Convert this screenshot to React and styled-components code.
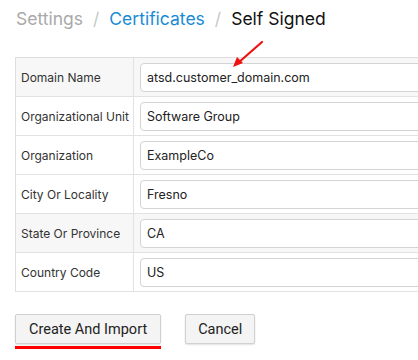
import React from 'react'
import styled, { createGlobalStyle } from 'styled-components'

const GlobalStyle = createGlobalStyle`
    body {
        margin: 0;
        background: #fff;
        overflow: hidden;
        font-family: Inter, "Noto Sans", sans-serif;
    }
`

const Page = styled.div`
    position: relative;
    padding: 5px 0 0 15px;
    width: 560px;
`

const Breadcrumb = styled.div`
    display: flex;
    align-items: center;
    gap: 9px;
    font-size: 17.5px;
    height: 26px;
    margin-bottom: 26px;
    padding-left: 1px;
`

const Crumb = styled.span`
    color: ${props => props.color};
`

const Sep = styled.span`
    color: #c8c8c8;
    margin: 0 1px;
`

const Table = styled.table`
    border-collapse: collapse;
    table-layout: fixed;
    width: 520px;
    border: 1px solid #dedede;
`

const Row = styled.tr`
    height: 39px;
    border-bottom: 1px solid #e2e2e2;
    background: ${props => (props.shade ? '#f7f7f7' : '#fff')};
`

const LabelCol = styled.col`
    width: 118px;
`

const Label = styled.td`
    padding: 0 5px;
    font-size: 12px;
    color: #333;
    border-right: 1px solid #e2e2e2;
    white-space: nowrap;
    overflow: hidden;
`

const Cell = styled.td`
    padding: 4px 6px;
`

const Input = styled.input`
    box-sizing: border-box;
    display: block;
    width: 100%;
    height: 29px;
    border: 1px solid #d4d4d4;
    border-radius: 4px;
    background: #fff;
    padding: 0 6px;
    font-family: Inter, "Noto Sans", sans-serif;
    font-size: 12.5px;
    color: #222;
    outline: none;
`

const Actions = styled.div`
    display: flex;
    gap: 24px;
    margin-top: 22px;
`

const ButtonWrap = styled.div`
    display: flex;
    flex-direction: column;
    gap: 2px;
`

const Button = styled.button`
    height: 30px;
    padding: 0 ${props => props.pad}px;
    background: #f4f4f4;
    border: 1px solid #d0d0d0;
    border-radius: 2px;
    box-shadow: 0 1px 2px rgba(0, 0, 0, 0.12);
    font-family: Roboto, "Liberation Sans", sans-serif;
    font-size: 14.5px;
    color: #222;
`

const Underline = styled.div`
    height: 3px;
    background: #f00;
`

const Arrow = styled.svg`
    position: absolute;
    left: 230px;
    top: 38px;
`

const fields = [
    ['Domain Name', 'atsd.customer_domain.com', true],
    ['Organizational Unit', 'Software Group', false],
    ['Organization', 'ExampleCo', false],
    ['City Or Locality', 'Fresno', false],
    ['State Or Province', 'CA', true],
    ['Country Code', 'US', false],
]

const App = () => {
    return (
        <Page>
            <GlobalStyle />
            <Breadcrumb>
                <Crumb color="#a9a9a9">Settings</Crumb>
                <Sep>/</Sep>
                <Crumb color="#1a8ad4">Certificates</Crumb>
                <Sep>/</Sep>
                <Crumb color="#111">Self Signed</Crumb>
            </Breadcrumb>
            <Table>
                <colgroup>
                    <LabelCol />
                    <col />
                </colgroup>
                <tbody>
                    {fields.map(([label, value, shade]) => (
                        <Row key={label} shade={shade}>
                            <Label>{label}</Label>
                            <Cell>
                                <Input defaultValue={value} />
                            </Cell>
                        </Row>
                    ))}
                </tbody>
            </Table>
            <Actions>
                <ButtonWrap>
                    <Button pad={13}>Create And Import</Button>
                    <Underline />
                </ButtonWrap>
                <ButtonWrap>
                    <Button pad={12}>Cancel</Button>
                </ButtonWrap>
            </Actions>
            <Arrow width="36" height="34" viewBox="0 0 36 34">
                <line x1="32" y1="4" x2="8" y2="25" stroke="#f01010" strokeWidth="2.2" strokeLinecap="round" />
                <polygon points="3,29 7,19 13,25" fill="#f01010" />
            </Arrow>
        </Page>
    )
}

export default App
